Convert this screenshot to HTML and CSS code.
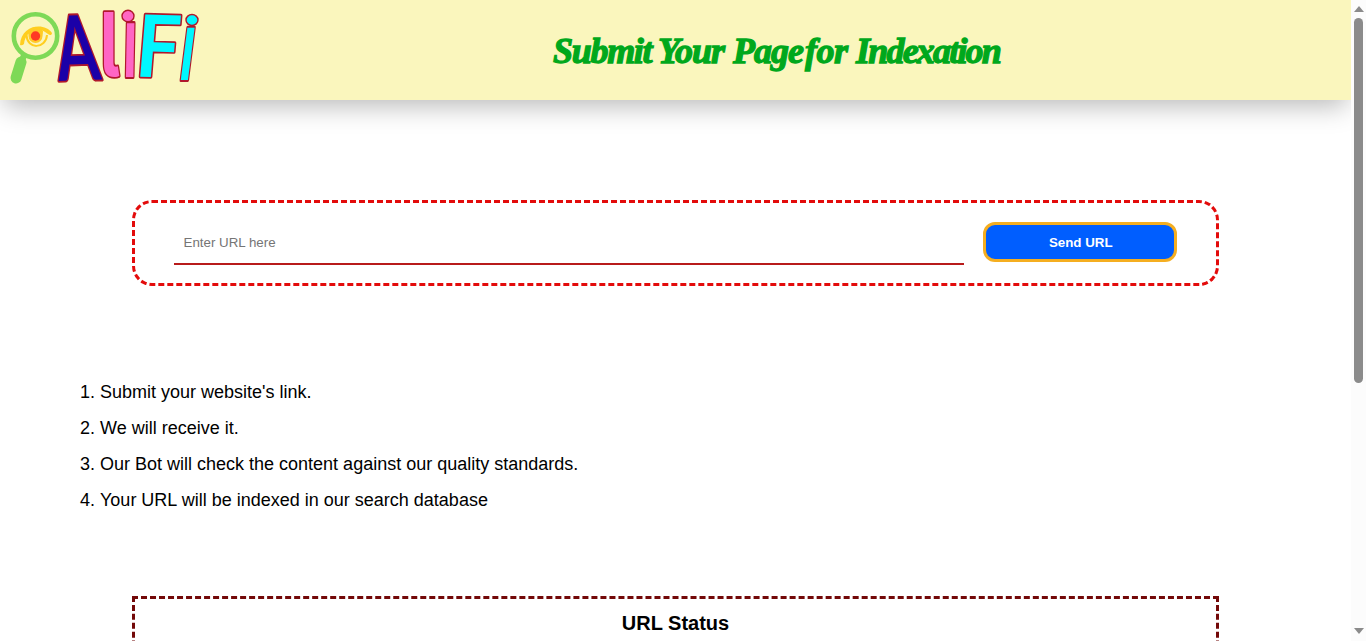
FILE: index.html
```
<!DOCTYPE html>
<html lang="en">
<head>
<meta charset="utf-8">
<title>Submit Your Page for Indexation</title>
<link rel="stylesheet" href="styles.css">
</head>
<body>
<div class="page">
  <header class="header">
    <svg class="logo" width="210" height="100" viewBox="0 0 210 100" role="img" aria-label="AliFi">
      <path d="M21 62 L16 78" stroke="#7ed957" stroke-width="11" stroke-linecap="round"/>
      <path d="M25 53 L20 65" stroke="#7ed957" stroke-width="6"/>
      <circle cx="35.500" cy="36" r="21.700" fill="#faf6bd" stroke="#7ed957" stroke-width="4.600"/>
      <path d="M26.500 35 C27 50 46 49 47 35" fill="none" stroke="#ffce1f" stroke-width="2"/>
      <path d="M20 45 C21 24 45 22 52 33 C52 35 50 36 48 34 C38 25 25 31 24 44 Q22 46 20 45Z" fill="#ffce1f"/>
      <path d="M28 31 Q36 23 43 31 C43 45 28 44 28 31Z" fill="#ffce1f"/>
      <circle cx="35.500" cy="36" r="7" fill="#ffc928"/>
      <circle cx="35.500" cy="36" r="4.700" fill="#ff3a24"/>
      <g class="logo-text">
        <text class="letter navy" transform="matrix(.62 -.02 .1 .9 59 81)">A</text>
        <text class="letter pink tailed" transform="matrix(.64 0 0 .9 100 77)">l</text>
        <text class="letter pink" transform="matrix(.6 0 -.02 1.05 122 77)">ı</text>
        <text class="letter cyan" transform="matrix(.78 .02 -.07 .86 134 76.500)">F</text>
        <text class="letter cyan" transform="matrix(.58 0 -.13 1.02 177 80)">ı</text>
      </g>
      <ellipse class="dot pink" cx="128" cy="16" rx="6" ry="5.800"/>
      <ellipse class="dot cyan" cx="192" cy="20" rx="6" ry="5.500"/>
    </svg>
    <h1 class="title"><span class="w-submit">Submit</span> <span class="w-your">Your</span> <span class="w-page">Page</span> <span class="w-for">for</span> <span class="w-index">Indexation</span></h1>
  </header>
  <main>
    <form class="submit-box">
      <input class="url" type="text" placeholder="Enter URL here">
      <button class="send" type="button">Send URL</button>
    </form>
    <ol class="steps">
      <li>Submit your website's link.</li>
      <li>We will receive it.</li>
      <li>Our Bot will check the content against our quality standards.</li>
      <li>Your URL will be indexed in our search database</li>
    </ol>
    <section class="status"><h2>URL Status</h2></section>
  </main>
</div>
<div class="scrollbar">
  <svg width="10" height="6"><path d="M0 6 L5 0 L10 6Z" fill="#8b8b8b"/></svg>
  <div class="thumb"></div>
  <svg class="down" width="10" height="6"><path d="M0 0 L5 6 L10 0Z" fill="#8b8b8b"/></svg>
</div>
</body>
</html>
```
FILE: styles.css
```
* { box-sizing: border-box; }
body {
  margin: 0;
  height: 641px;
  display: flex;
  overflow: hidden;
  background: #fff;
  color: #000;
  font-family: "Liberation Sans", Arial, sans-serif;
}
.page { width: 1351px; height: 641px; overflow: hidden; }
.header {
  height: 100px;
  display: flex;
  background: #faf6bd;
  box-shadow: 0 10px 25px -4px rgba(0, 0, 0, .28);
}
.logo { display: block; flex: none; overflow: visible; }
.letter {
  font: 700 100px Lato, sans-serif;
  paint-order: stroke;
  stroke: #b0182c;
  stroke-width: 4px;
  stroke-linejoin: round;
}
.tailed { font-family: Inter, sans-serif; font-feature-settings: "cv05", "ss02"; }
.navy { fill: #1b00a8; }
.pink { fill: #ff66c4; }
.cyan { fill: #00f7ff; }
.dot { stroke: #b0182c; stroke-width: 1.4px; }
.title {
  display: flex;
  margin: 28px 0 0 343px;
  gap: 8px;
  color: #00a81c;
  font: italic 700 36px/46px "Liberation Serif", serif;
  -webkit-text-stroke: 1.3px #00a81c;
  white-space: nowrap;
}
.title span { flex: none; }
.w-submit { width: 97px; letter-spacing: -1.3px; }
.w-your { width: 67px; letter-spacing: -1px; }
.w-page { width: 64px; letter-spacing: -1px; }
.w-for { width: 43px; letter-spacing: -.5px; }
.w-index { width: 146px; letter-spacing: -1.8px; }
.submit-box {
  width: 1087px;
  height: 86px;
  margin: 100px 0 0 132px;
  padding: 19px 38.5px;
  display: flex;
  gap: 19px;
  align-items: flex-start;
  border: 3px dashed #e30b0b;
  border-radius: 20px;
}
.url {
  width: 790px;
  height: 43px;
  padding: 0 10px;
  border: 0;
  border-bottom: 2px solid #b81b1b;
  outline: 0;
  background: transparent;
  font: 13.333px "Liberation Sans", Arial, sans-serif;
}
.url::placeholder { color: #757575; }
.send {
  width: 194.5px;
  height: 40px;
  padding: 0 5px 0 7px;
  border: 3px solid #f5ae20;
  border-radius: 12px;
  background: #005eff;
  color: #fff;
  font: 700 13.333px "Liberation Sans", Arial, sans-serif;
}
.steps {
  margin: 88px 0 0;
  padding: 0 0 0 100px;
  font-size: 18px;
  line-height: 36px;
}
.status {
  width: 1087px;
  height: 300px;
  margin: 78px 0 0 132px;
  border: 3px dashed #730808;
}
.status h2 {
  margin: 12px 0 0;
  text-align: center;
  font-size: 20px;
  line-height: 24px;
}
.scrollbar {
  width: 15px;
  height: 641px;
  padding: 6px 0 7px;
  display: flex;
  flex-direction: column;
  align-items: center;
  background: #fcfcfc;
}
.thumb {
  width: 9px;
  height: 365px;
  margin-top: 6px;
  border-radius: 5px;
  background: #8b8b8b;
}
.down { margin-top: auto; }
```
